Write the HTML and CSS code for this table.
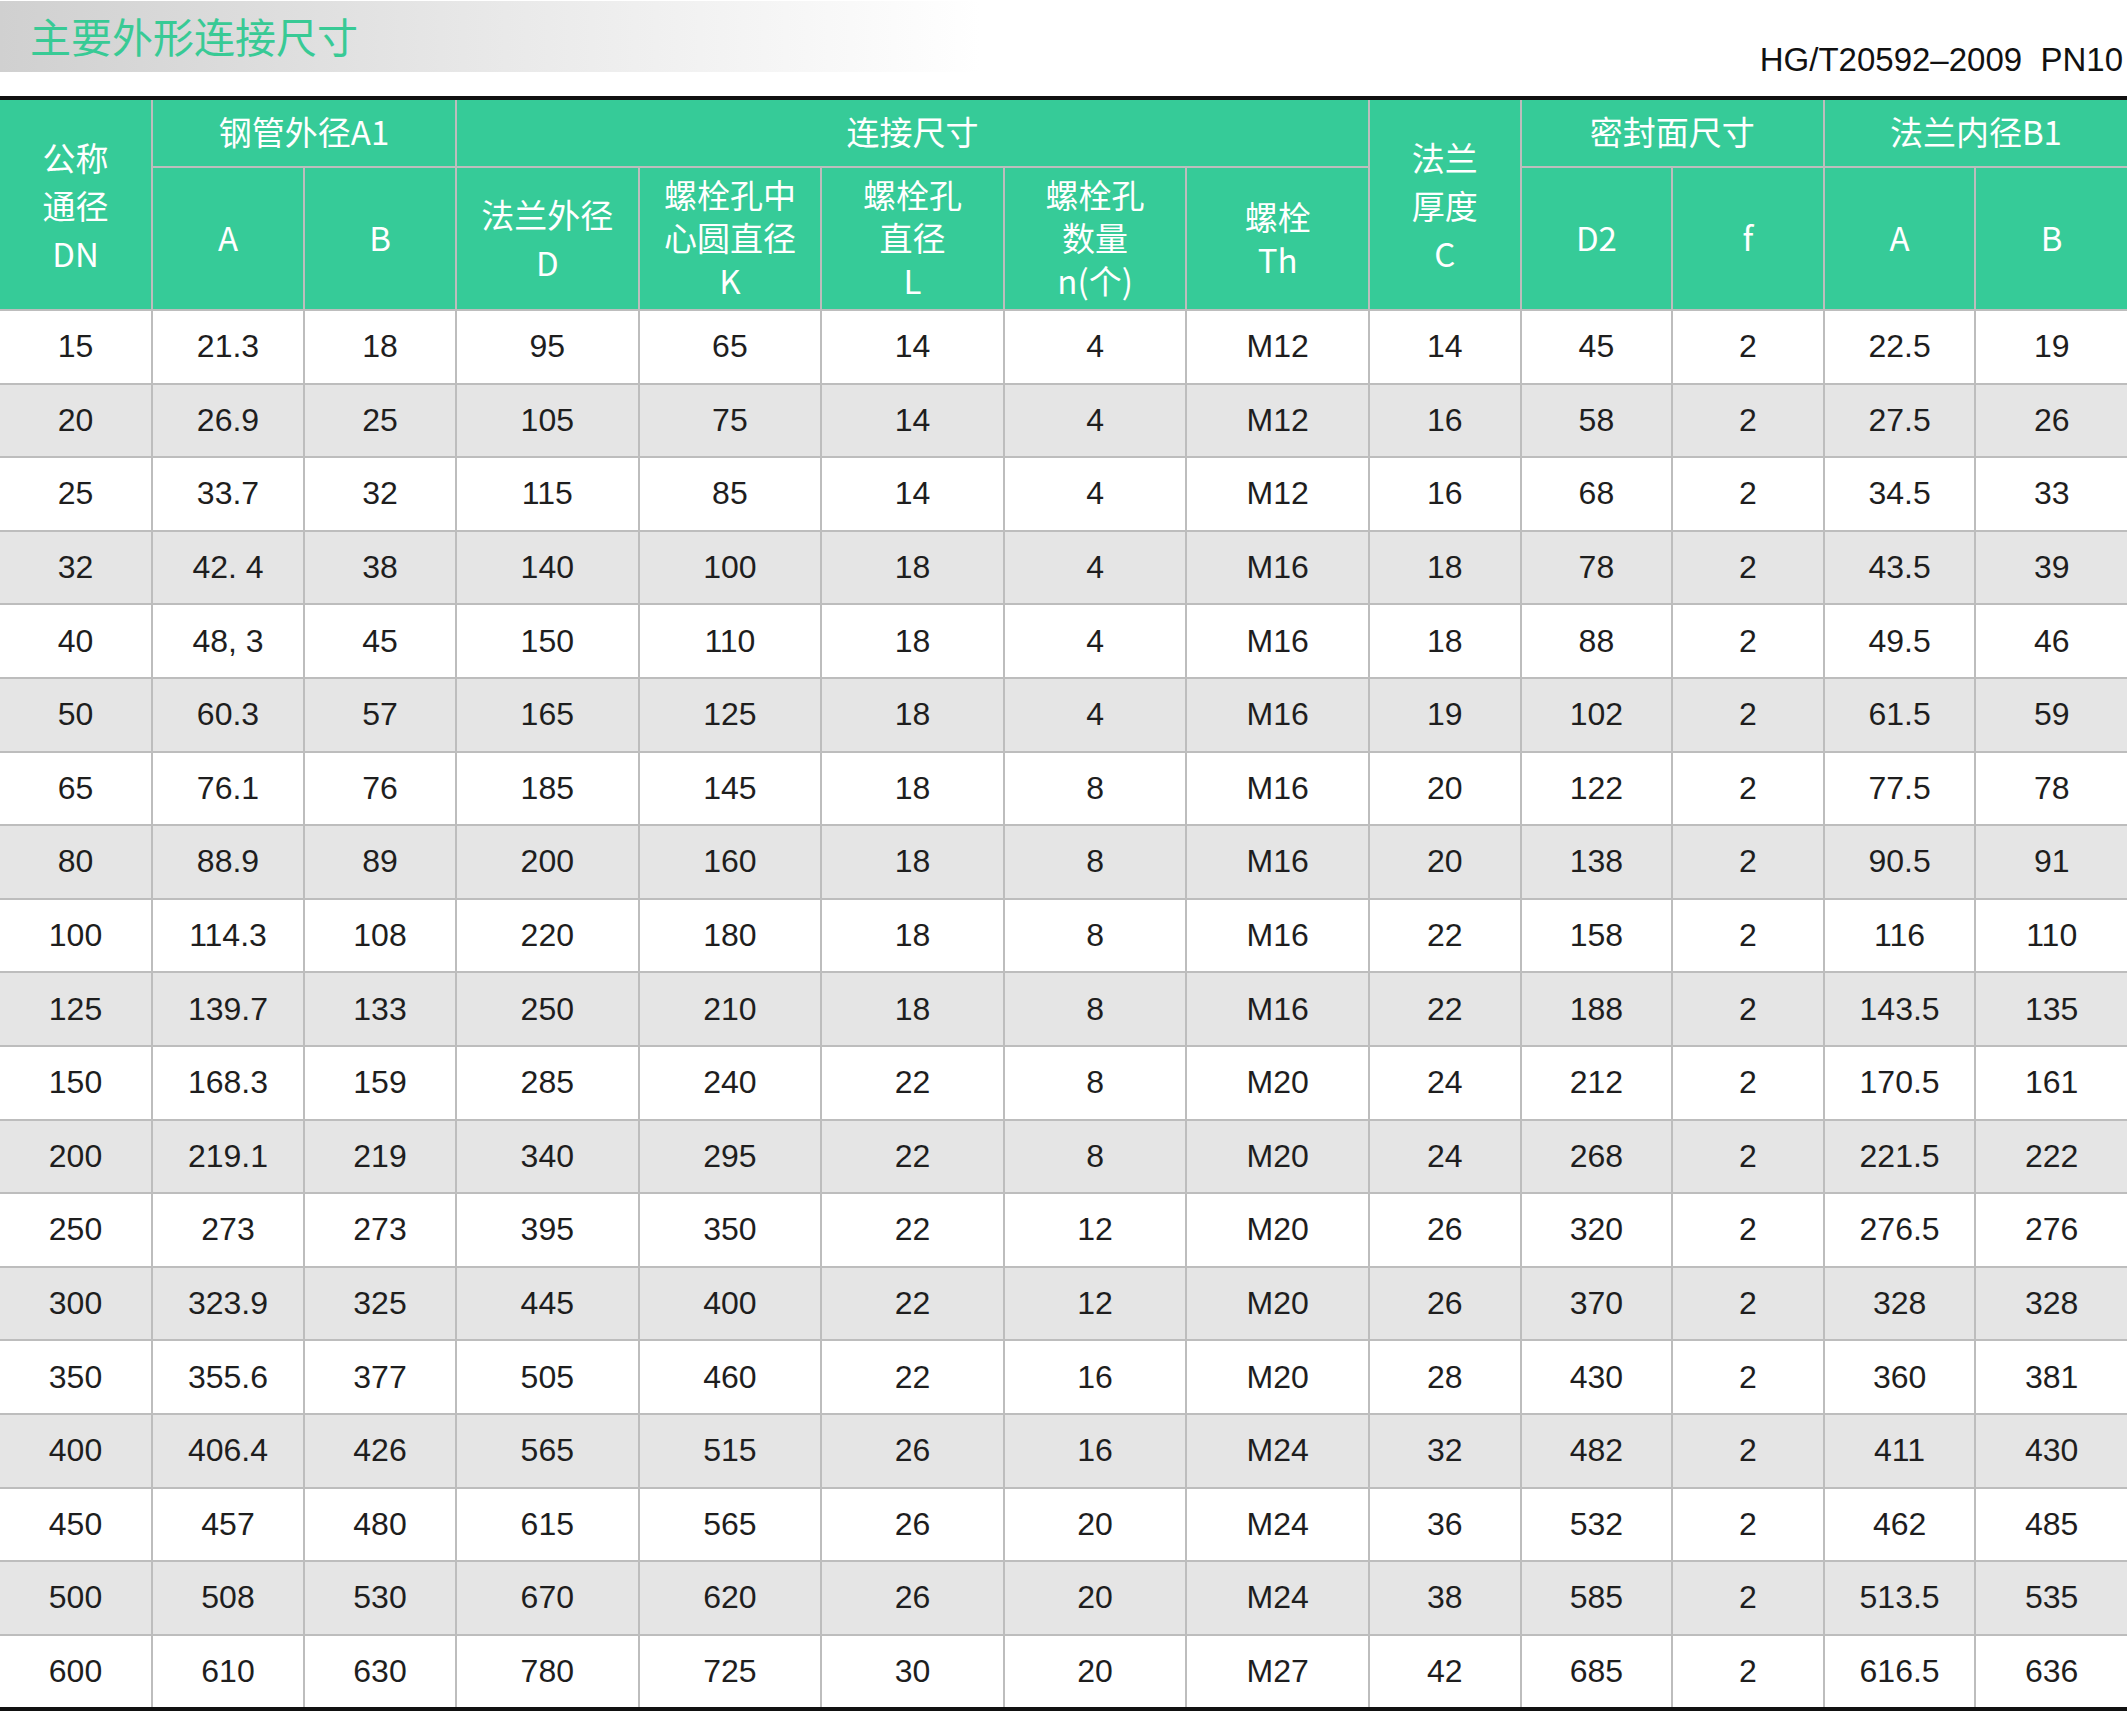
FILE: index.html
```html
<!DOCTYPE html>
<html lang="zh-CN">
<head>
<meta charset="utf-8">
<title>主要外形连接尺寸</title>
<link rel="stylesheet" href="styles.css">
</head>
<body>
<div class="top">
  <div class="title-bar"><h1 class="title">主要外形连接尺寸</h1></div>
  <div class="std">HG/T20592–2009&nbsp; PN10</div>
</div>
<table class="spec">
  <colgroup>
    <col class="cs"><col class="cs"><col class="cs">
    <col class="cb"><col class="cb"><col class="cb"><col class="cb"><col class="cb">
    <col class="cr"><col class="cr"><col class="cr"><col class="cr"><col class="cr">
  </colgroup>
  <thead>
    <tr class="h1">
      <th rowspan="2" class="tall">公称<br>通径<br>DN</th>
      <th colspan="2" class="group">钢管外径A1</th>
      <th colspan="5" class="group">连接尺寸</th>
      <th rowspan="2" class="tall">法兰<br>厚度<br>C</th>
      <th colspan="2" class="group">密封面尺寸</th>
      <th colspan="2" class="group">法兰内径B1</th>
    </tr>
    <tr class="h2">
      <th>A</th>
      <th>B</th>
      <th class="tall">法兰外径<br>D</th>
      <th>螺栓孔中<br>心圆直径<br>K</th>
      <th>螺栓孔<br>直径<br>L</th>
      <th>螺栓孔<br>数量<br>n(个)</th>
      <th>螺栓<br>Th</th>
      <th>D2</th>
      <th>f</th>
      <th>A</th>
      <th>B</th>
    </tr>
  </thead>
  <tbody>
    <tr><td>15</td><td>21.3</td><td>18</td><td>95</td><td>65</td><td>14</td><td>4</td><td>M12</td><td>14</td><td>45</td><td>2</td><td>22.5</td><td>19</td></tr>
    <tr><td>20</td><td>26.9</td><td>25</td><td>105</td><td>75</td><td>14</td><td>4</td><td>M12</td><td>16</td><td>58</td><td>2</td><td>27.5</td><td>26</td></tr>
    <tr><td>25</td><td>33.7</td><td>32</td><td>115</td><td>85</td><td>14</td><td>4</td><td>M12</td><td>16</td><td>68</td><td>2</td><td>34.5</td><td>33</td></tr>
    <tr><td>32</td><td>42. 4</td><td>38</td><td>140</td><td>100</td><td>18</td><td>4</td><td>M16</td><td>18</td><td>78</td><td>2</td><td>43.5</td><td>39</td></tr>
    <tr><td>40</td><td>48, 3</td><td>45</td><td>150</td><td>110</td><td>18</td><td>4</td><td>M16</td><td>18</td><td>88</td><td>2</td><td>49.5</td><td>46</td></tr>
    <tr><td>50</td><td>60.3</td><td>57</td><td>165</td><td>125</td><td>18</td><td>4</td><td>M16</td><td>19</td><td>102</td><td>2</td><td>61.5</td><td>59</td></tr>
    <tr><td>65</td><td>76.1</td><td>76</td><td>185</td><td>145</td><td>18</td><td>8</td><td>M16</td><td>20</td><td>122</td><td>2</td><td>77.5</td><td>78</td></tr>
    <tr><td>80</td><td>88.9</td><td>89</td><td>200</td><td>160</td><td>18</td><td>8</td><td>M16</td><td>20</td><td>138</td><td>2</td><td>90.5</td><td>91</td></tr>
    <tr><td>100</td><td>114.3</td><td>108</td><td>220</td><td>180</td><td>18</td><td>8</td><td>M16</td><td>22</td><td>158</td><td>2</td><td>116</td><td>110</td></tr>
    <tr><td>125</td><td>139.7</td><td>133</td><td>250</td><td>210</td><td>18</td><td>8</td><td>M16</td><td>22</td><td>188</td><td>2</td><td>143.5</td><td>135</td></tr>
    <tr><td>150</td><td>168.3</td><td>159</td><td>285</td><td>240</td><td>22</td><td>8</td><td>M20</td><td>24</td><td>212</td><td>2</td><td>170.5</td><td>161</td></tr>
    <tr><td>200</td><td>219.1</td><td>219</td><td>340</td><td>295</td><td>22</td><td>8</td><td>M20</td><td>24</td><td>268</td><td>2</td><td>221.5</td><td>222</td></tr>
    <tr><td>250</td><td>273</td><td>273</td><td>395</td><td>350</td><td>22</td><td>12</td><td>M20</td><td>26</td><td>320</td><td>2</td><td>276.5</td><td>276</td></tr>
    <tr><td>300</td><td>323.9</td><td>325</td><td>445</td><td>400</td><td>22</td><td>12</td><td>M20</td><td>26</td><td>370</td><td>2</td><td>328</td><td>328</td></tr>
    <tr><td>350</td><td>355.6</td><td>377</td><td>505</td><td>460</td><td>22</td><td>16</td><td>M20</td><td>28</td><td>430</td><td>2</td><td>360</td><td>381</td></tr>
    <tr><td>400</td><td>406.4</td><td>426</td><td>565</td><td>515</td><td>26</td><td>16</td><td>M24</td><td>32</td><td>482</td><td>2</td><td>411</td><td>430</td></tr>
    <tr><td>450</td><td>457</td><td>480</td><td>615</td><td>565</td><td>26</td><td>20</td><td>M24</td><td>36</td><td>532</td><td>2</td><td>462</td><td>485</td></tr>
    <tr><td>500</td><td>508</td><td>530</td><td>670</td><td>620</td><td>26</td><td>20</td><td>M24</td><td>38</td><td>585</td><td>2</td><td>513.5</td><td>535</td></tr>
    <tr><td>600</td><td>610</td><td>630</td><td>780</td><td>725</td><td>30</td><td>20</td><td>M27</td><td>42</td><td>685</td><td>2</td><td>616.5</td><td>636</td></tr>
  </tbody>
</table>
</body>
</html>
```

FILE: styles.css
```css
html, body {
  margin: 0;
  padding: 0;
  background: #ffffff;
}

body {
  width: 2127px;
  overflow: hidden;
  font-family: "Liberation Sans", Arial, sans-serif;
}

.top {
  display: flex;
  align-items: flex-start;
  height: 96px;
}

.title-bar {
  width: 980px;
  height: 71px;
  margin-top: 1px;
  box-sizing: border-box;
  padding-bottom: 4px;
  background: linear-gradient(to right, #d0d0d0 0%, #e6e6e6 45%, #ffffff 100%);
  display: flex;
  align-items: center;
}

.title {
  margin: 0 0 0 30px;
  font-family: "Noto Sans CJK SC", sans-serif;
  font-weight: 400;
  font-size: 41px;
  line-height: 48px;
  color: #38ca95;
}

.std {
  margin-left: auto;
  margin-top: 41px;
  padding-right: 4px;
  font-family: "Liberation Sans", Arial, sans-serif;
  font-size: 33px;
  line-height: 38px;
  color: #111111;
  white-space: nowrap;
}

.spec {
  width: 2127px;
  table-layout: fixed;
  border-collapse: collapse;
  border-top: 4px solid #111111;
  border-bottom: 4px solid #111111;
}

.cs { width: 152px; }
.cb { width: 182.6px; }
.cr { width: 151.6px; }

.spec th,
.spec td {
  border: 2px solid #bdbdbd;
  padding: 0;
  text-align: center;
  vertical-align: middle;
}

.spec tr > :first-child { border-left: none; }
.spec tr > :last-child { border-right: none; }

.spec th {
  background: #36cb98;
  color: #ffffff;
  font-family: "Noto Sans CJK SC", sans-serif;
  font-weight: 400;
  font-size: 33px;
  line-height: 43px;
}

.spec th.tall {
  line-height: 48px;
}

.spec th.group {
  padding-bottom: 4px;
}

.h2 th {
  padding-bottom: 2px;
}

.h1 { height: 69px; }
.h2 { height: 143px; }

.spec td {
  height: 71.6px;
  font-size: 32px;
  color: #1e1e1e;
}

.spec tbody tr:nth-child(even) td {
  background: #e5e5e5;
}
```
